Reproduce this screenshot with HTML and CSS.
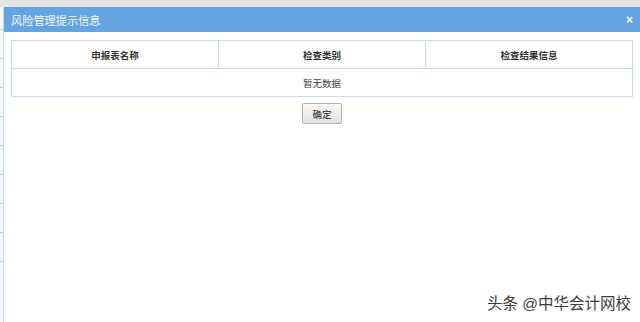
FILE: index.html
```html
<!DOCTYPE html>
<html lang="zh-CN">
<head>
    <meta charset="UTF-8">
    <title>风险管理提示信息</title>
    <link rel="stylesheet" href="styles.css">
</head>
<body>
    <div class="top-strip"></div>
    <div class="page">
        <div class="side-strip">
            <span class="side-mark"></span>
            <span class="side-mark"></span>
            <span class="side-mark"></span>
            <span class="side-mark"></span>
            <span class="side-mark"></span>
            <span class="side-mark"></span>
            <span class="side-mark"></span>
            <span class="side-mark"></span>
            <span class="side-mark"></span>
        </div>
        <div class="dialog">
            <div class="dialog-header">
                <span class="dialog-title">风险管理提示信息</span>
                <span class="dialog-close">&times;</span>
            </div>
            <div class="dialog-body">
                <table class="risk-table">
                    <thead>
                        <tr>
                            <th>申报表名称</th>
                            <th>检查类别</th>
                            <th>检查结果信息</th>
                        </tr>
                    </thead>
                    <tbody>
                        <tr>
                            <td colspan="3">暂无数据</td>
                        </tr>
                    </tbody>
                </table>
                <div class="actions">
                    <button class="ok-button">确定</button>
                </div>
            </div>
            <div class="watermark">头条 @中华会计网校</div>
        </div>
    </div>
</body>
</html>
```

FILE: styles.css
```css
body {
    margin: 0;
    height: 322px;
    overflow: hidden;
    font-family: "Liberation Sans", "Noto Sans CJK SC", sans-serif;
    background-color: #fff;
    display: flex;
    flex-direction: column;
}

.top-strip {
    height: 7px;
    background-color: #e6e6e6;
    flex-shrink: 0;
}

.page {
    flex-grow: 1;
    display: flex;
}

/* кусочек страницы под окном */
.side-strip {
    width: 3px;
    background-color: #f4f6f8;
    border-right: 1px solid #c4dbf1;
    display: flex;
    flex-direction: column;
    gap: 28px;
    padding-top: 22px;
}

.side-mark {
    display: block;
    height: 1px;
    background-color: #b9cfe6;
}

.dialog {
    flex-grow: 1;
    display: flex;
    flex-direction: column;
    background-color: #fff;
}

.dialog-header {
    height: 25px;
    background-color: #64a5e1;
    display: flex;
    align-items: center;
    justify-content: space-between;
    padding: 0 7px 0 7px;
}

.dialog-title {
    color: #f2f7fc;
    font-size: 11.2px;
}

.dialog-close {
    color: #fff;
    font-size: 12px;
    font-weight: bold;
    line-height: 1;
}

.dialog-body {
    padding: 8px 7px 0 7px;
}

.risk-table {
    width: 622px;
    border-collapse: collapse;
    border: 1px solid #c5dcf3;
}

.risk-table th,
.risk-table td {
    border: 1px solid #c5dcf3;
    height: 27px;
    text-align: center;
    font-size: 9.5px;
    color: #333;
    padding: 0;
}

.risk-table th {
    font-weight: bold;
    width: 33.3%;
}

.risk-table td {
    color: #444;
}

.actions {
    display: flex;
    justify-content: center;
    padding-top: 6px;
}

.ok-button {
    width: 40px;
    height: 21px;
    font-family: inherit;
    font-size: 9.5px;
    color: #222;
    background: linear-gradient(#fafafa, #e2e2e2);
    border: 1px solid #b4b4b4;
    border-radius: 2px;
    padding: 0;
}

.watermark {
    margin-top: auto;
    align-self: flex-end;
    margin-right: 9px;
    margin-bottom: 9px;
    font-size: 15.5px;
    color: #3c3c3c;
}
```
